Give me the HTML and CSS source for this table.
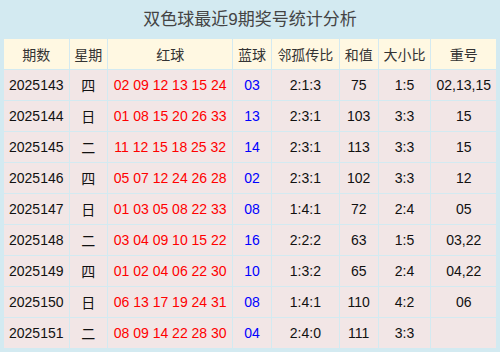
FILE: index.html
```html
<!DOCTYPE html>
<html>
<head>
<meta charset="utf-8">
<link rel="stylesheet" href="styles.css">
</head>
<body>
<div class="wrap">
  <div class="title">双色球最近9期奖号统计分析</div>
  <table class="tbl">
    <colgroup>
      <col style="width:64px"><col style="width:38px"><col style="width:123px"><col style="width:38px"><col style="width:67px"><col style="width:38px"><col style="width:52px"><col style="width:64px">
    </colgroup>
    <thead>
      <tr><th>期数</th><th>星期</th><th>红球</th><th>蓝球</th><th>邻孤传比</th><th>和值</th><th>大小比</th><th>重号</th></tr>
    </thead>
    <tbody>
      <tr><td>2025143</td><td>四</td><td class="red">02 09 12 13 15 24</td><td class="blue">03</td><td>2:1:3</td><td>75</td><td>1:5</td><td>02,13,15</td></tr>
      <tr><td>2025144</td><td>日</td><td class="red">01 08 15 20 26 33</td><td class="blue">13</td><td>2:3:1</td><td>103</td><td>3:3</td><td>15</td></tr>
      <tr><td>2025145</td><td>二</td><td class="red">11 12 15 18 25 32</td><td class="blue">14</td><td>2:3:1</td><td>113</td><td>3:3</td><td>15</td></tr>
      <tr><td>2025146</td><td>四</td><td class="red">05 07 12 24 26 28</td><td class="blue">02</td><td>2:3:1</td><td>102</td><td>3:3</td><td>12</td></tr>
      <tr><td>2025147</td><td>日</td><td class="red">01 03 05 08 22 33</td><td class="blue">08</td><td>1:4:1</td><td>72</td><td>2:4</td><td>05</td></tr>
      <tr><td>2025148</td><td>二</td><td class="red">03 04 09 10 15 22</td><td class="blue">16</td><td>2:2:2</td><td>63</td><td>1:5</td><td>03,22</td></tr>
      <tr><td>2025149</td><td>四</td><td class="red">01 02 04 06 22 30</td><td class="blue">10</td><td>1:3:2</td><td>65</td><td>2:4</td><td>04,22</td></tr>
      <tr><td>2025150</td><td>日</td><td class="red">06 13 17 19 24 31</td><td class="blue">08</td><td>1:4:1</td><td>110</td><td>4:2</td><td>06</td></tr>
      <tr><td>2025151</td><td>二</td><td class="red">08 09 14 22 28 30</td><td class="blue">04</td><td>2:4:0</td><td>111</td><td>3:3</td><td></td></tr>
    </tbody>
  </table>
</div>
</body>
</html>
```
FILE: styles.css
```css
html, body {
  margin: 0;
  padding: 0;
  background: #d3eaf1;
}
.wrap {
  width: 500px;
  height: 352px;
  padding: 0 4px;
  box-sizing: border-box;
  font-family: "Liberation Sans", "Noto Sans CJK SC", sans-serif;
}
.title {
  height: 38px;
  line-height: 40px;
  text-align: center;
  font-size: 17px;
  color: #444;
}
.tbl {
  width: 492px;
  border-collapse: collapse;
  table-layout: fixed;
  background: #d3eaf1;
}
.tbl th, .tbl td {
  height: 30px;
  padding: 0;
  text-align: center;
  font-size: 14px;
  border: 1px solid #d3eaf1;
  white-space: nowrap;
  overflow: hidden;
}
.tbl th {
  background: #fff8e2;
  font-weight: normal;
  color: #333;
}
.tbl td {
  background: #f2e6e6;
  color: #111;
}
.tbl td.red { color: #f00; }
.tbl td.blue { color: #00f; }
.tbl th:first-child, .tbl td:first-child { border-left: 0; }
.tbl th:last-child, .tbl td:last-child { border-right: 0; }
```
